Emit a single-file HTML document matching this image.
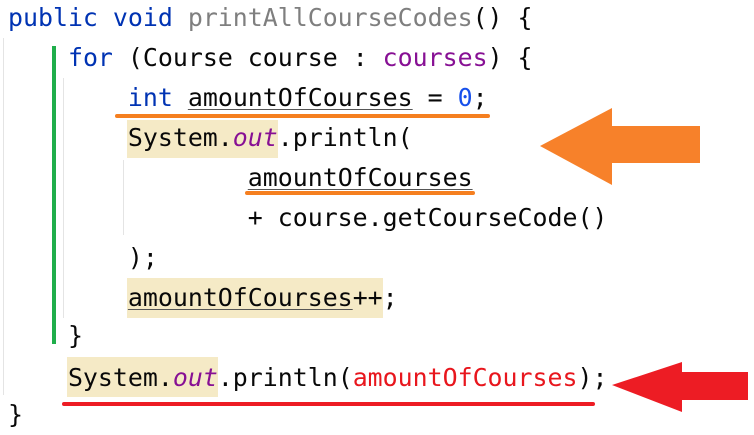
<!DOCTYPE html>
<html><head><meta charset="utf-8"><style>
html,body{margin:0;padding:0;background:#fff;width:754px;height:435px;overflow:hidden;position:relative}
.l{position:absolute;left:8px;font-family:"DejaVu Sans Mono","Liberation Mono",monospace;font-size:24.9px;line-height:40px;white-space:pre;color:#080808}
.k{color:#0033b3}.g{color:#7f7f7f}.p{color:#871094}.n{color:#1750eb}.i{font-style:italic;color:#871094}.r{color:#e8161d}
.u{text-decoration:underline;text-decoration-color:#555;text-decoration-thickness:1px;text-underline-offset:3px}
.b{position:absolute}
</style></head><body>
<div class="b" style="left:127px;top:120px;width:151px;height:38px;background:#f5eac6"></div>
<div class="b" style="left:127px;top:278px;width:256px;height:40px;background:#f5eac6"></div>
<div class="b" style="left:67px;top:357px;width:151px;height:40px;background:#f5eac6"></div>
<div class="b" style="left:3px;top:38px;width:1px;height:357px;background:#e4e4e4"></div>
<div class="b" style="left:63px;top:78px;width:1px;height:240px;background:#e4e4e4"></div>
<div class="b" style="left:123px;top:160px;width:1px;height:75px;background:#e4e4e4"></div>
<div class="b" style="left:52px;top:46px;width:4px;height:298px;background:#1fae4b"></div>

<div class="l" style="top:-2px"><span class="k">public void </span><span class="g">printAllCourseCodes</span>() {</div>
<div class="l" style="top:38px">    <span class="k">for</span> (Course course : <span class="p">courses</span>) {</div>
<div class="l" style="top:78px">        <span class="k">int</span> <span class="u">amountOfCourses</span> = <span class="n">0</span>;</div>
<div class="l" style="top:118px">        System.<span class="i">out</span>.println(</div>
<div class="l" style="top:158px">                <span class="u">amountOfCourses</span></div>
<div class="l" style="top:198px">                + course.getCourseCode()</div>
<div class="l" style="top:238px">        );</div>
<div class="l" style="top:278px">        <span class="u">amountOfCourses</span>++;</div>
<div class="l" style="top:316px">    }</div>
<div class="l" style="top:358px">    System.<span class="i">out</span>.println(<span class="r">amountOfCourses</span>);</div>
<div class="l" style="top:395px">}</div>

<div class="b" style="left:115px;top:114px;width:375px;height:4px;background:#f57f20;border-radius:2px"></div>
<div class="b" style="left:245px;top:191px;width:230px;height:4px;background:#f57f20;border-radius:2px"></div>
<div class="b" style="left:62px;top:402px;width:533px;height:4px;background:#ed1c24;border-radius:2px"></div>
<svg class="b" style="left:0;top:0" width="754" height="435">
<polygon points="540,146 612,108 612,126 700,126 700,163 612,163 612,185" fill="#f7812a"/>
<polygon points="612,385 682,362 682,372 748,372 748,400 682,400 682,412" fill="#ed1c24"/>
</svg>
</body></html>
